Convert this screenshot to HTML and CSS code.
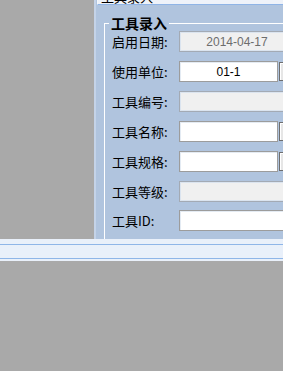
FILE: index.html
```html
<!DOCTYPE html>
<html lang="zh-CN">

<head>
  <meta charset="UTF-8" />
  <title>工具录入</title>
  <link rel="stylesheet" href="styles.css">
</head>

<body>
  <div class="desk">
    <div class="window">
      <div class="title-bar"><span>工具录入</span></div>
      <fieldset class="tool-form">
        <legend>工具录入</legend>
        <div class="row">
          <label>启用日期:</label>
          <input class="field wide" type="text" value="2014-04-17" disabled />
        </div>
        <div class="row">
          <label>使用单位:</label>
          <input class="field" type="text" value="01-1" />
          <button class="pick"></button>
        </div>
        <div class="row">
          <label>工具编号:</label>
          <input class="field wide" type="text" value="" disabled />
        </div>
        <div class="row">
          <label>工具名称:</label>
          <input class="field" type="text" value="" />
          <button class="pick"></button>
        </div>
        <div class="row">
          <label>工具规格:</label>
          <input class="field" type="text" value="" />
          <button class="pick"></button>
        </div>
        <div class="row">
          <label>工具等级:</label>
          <input class="field wide" type="text" value="" disabled />
        </div>
        <div class="row">
          <label>工具ID:</label>
          <input class="field wide plain" type="text" value="" />
        </div>
      </fieldset>
    </div>
  </div>
  <div class="status-bar">
    <div class="status-inner"></div>
  </div>
</body>

</html>
```

FILE: styles.css
```css
html,
body {
  margin: 0;
  padding: 0;
}

body {
  background: #a9a9a9;
  font-family: "Noto Sans CJK SC", "Liberation Sans", sans-serif;
  font-size: 13px;
  color: #000;
  overflow: hidden;
}

.desk {
  height: 239px;
  overflow: hidden;
}

.window {
  margin-left: 94px;
  width: 220px;
  height: 239px;
  background: #b0c4de;
  border-left: 2px solid #c4d3e8;
  box-sizing: border-box;
  padding-left: 1px;
}

.title-bar {
  height: 4px;
  overflow: hidden;
  background: #eef2f9;
  border-left: 1px solid #f4f7fb;
  border-bottom: 1px solid #8fb4e6;
  font-size: 13px;
  line-height: 14px;
}

.title-bar span {
  display: block;
  margin-top: -10px;
  padding-left: 3px;
}

.tool-form {
  margin: 10px 0 0 7px;
  padding: 0 0 0 7px;
  border: 1px solid #fff;
  border-right: none;
  border-bottom: none;
  height: 260px;
}

.tool-form legend {
  padding: 0 2px;
  margin: 0 0 -4px -3px;
  font-weight: bold;
  font-size: 14px;
  line-height: 16px;
}

.row {
  display: flex;
  align-items: center;
  height: 29.83px;
}

.row label {
  width: 67px;
  flex: none;
  white-space: nowrap;
}

.field {
  box-sizing: border-box;
  width: 99px;
  height: 21px;
  margin: 0;
  padding: 0;
  border: 1px solid #9c9c9c;
  box-shadow: inset 1px 1px 0 #e4ebf3;
  background: #fff;
  font-family: "Liberation Sans", sans-serif;
  font-size: 12px;
  color: #000;
  text-align: center;
  flex: none;
}

.field.wide {
  width: 116px;
}

.field:disabled {
  background: #f0f0f0;
  color: #6d6d6d;
  border-color: #a3aab4;
  box-shadow: inset 0 0 0 1px #dbe4ef;
}

.pick {
  box-sizing: border-box;
  width: 17px;
  height: 19px;
  margin: 0 0 0 1px;
  padding: 0;
  border: 1px solid #6e6e6e;
  background: #e6e6e6;
  box-shadow: inset 1px 1px 0 #fff;
  flex: none;
}

.status-bar {
  height: 22px;
  background: #e9f0fa;
  box-sizing: border-box;
  padding-top: 5px;
}

.status-inner {
  height: 13px;
  border-top: 1px solid #8fb6e8;
  border-bottom: 1px solid #8fb6e8;
}
```
